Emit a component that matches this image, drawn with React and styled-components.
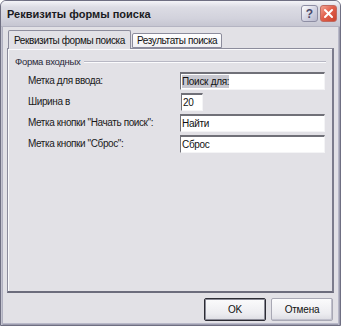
import React from "react";
import styled, { createGlobalStyle } from "styled-components";

const Global = createGlobalStyle`
  html, body {
    margin: 0;
    padding: 0;
    background: #ffffff;
  }
  body {
    font-family: "Liberation Sans", Arial, sans-serif;
  }
`;

const Window = styled.div`
  width: 341px;
  height: 326px;
  box-sizing: border-box;
  display: flex;
  flex-direction: column;
  background: #e2e1e6;
  border: 1px solid #6f6f82;
  border-radius: 6px 6px 0 0;
  overflow: hidden;
  box-shadow: inset 1px 0 0 #c4c4d0, inset 2px 0 0 #b0b0c0, inset -1px 0 0 #9c9cae,
    inset -2px 0 0 #b8b8c8, inset 0 -1px 0 #9c9cae, inset 0 -2px 0 #b8b8c8;
`;

const TitleBar = styled.div`
  height: 25px;
  flex: none;
  display: flex;
  align-items: center;
  padding: 0 3px 0 6px;
  background: linear-gradient(#f4f4f8 0%, #dcdce4 25%, #d2d2dc 70%, #c6c6d2 100%);
  border-bottom: 1px solid #b4b4c2;
`;

const Title = styled.div`
  flex: 1;
  font-weight: bold;
  font-size: 11px;
  color: #1a1a22;
`;

const CaptionButton = styled.div`
  width: 17px;
  height: 17px;
  box-sizing: border-box;
  margin-left: 2px;
  border-radius: 3px;
  border: 1px solid ${(p) => (p.$close ? "#c06a60" : "#8e8ea4")};
  background: ${(p) =>
    p.$close
      ? "linear-gradient(135deg, #f2a494 0%, #e2604c 45%, #c9442e 100%)"
      : "linear-gradient(135deg, #ffffff 0%, #d6d6e4 50%, #b8b8cc 100%)"};
  display: flex;
  align-items: center;
  justify-content: center;
  font-weight: bold;
  font-size: 12px;
  color: #4a4a6a;
`;

const Client = styled.div`
  flex: 1;
  display: flex;
  flex-direction: column;
  padding: 3px 6px 4px 6px;
`;

const TabRow = styled.div`
  display: flex;
  align-items: flex-end;
  height: 18px;
  padding-left: 1px;
  position: relative;
  z-index: 1;
`;

const Tab = styled.div`
  box-sizing: border-box;
  height: ${(p) => (p.$active ? "19px" : "15px")};
  margin-bottom: ${(p) => (p.$active ? "-1px" : "0")};
  padding: 0 ${(p) => (p.$active ? "5px" : "4px")};
  display: flex;
  align-items: center;
  font-size: 10px;
  letter-spacing: -0.4px;
  color: #111;
  border: 1px solid #8c8c9c;
  border-bottom: ${(p) => (p.$active ? "none" : "1px solid #8c8c9c")};
  border-radius: 2px 2px 0 0;
  background: ${(p) => (p.$active ? "#e2e1e6" : "linear-gradient(#ffffff, #f0f0f4)")};
  margin-left: ${(p) => (p.$active ? "0" : "1px")};
`;

const Panel = styled.div`
  flex: 1;
  box-sizing: border-box;
  border: 1px solid #8c8c9c;
  border-right: 2px solid #7c7c8c;
  border-bottom: 2px solid #6c6c7c;
  box-shadow: inset 1px 1px 0 #fafafc;
  background: #e2e1e6;
  padding: 7px 7px 0 7px;
`;

const GroupHead = styled.div`
  display: flex;
  align-items: center;
  font-size: 9.5px;
  letter-spacing: -0.3px;
  color: #2a2a3a;
  margin-bottom: 5px;
  &::after {
    content: "";
    flex: 1;
    height: 0;
    margin-left: 4px;
    margin-right: -1px;
    border-top: 1px solid #b8b8c4;
    border-bottom: 1px solid #fbfbfd;
  }
`;

const Rows = styled.div`
  display: flex;
  flex-direction: column;
  gap: 4px;
  padding-left: 13px;
`;

const Row = styled.div`
  display: flex;
  align-items: center;
  height: 17px;
`;

const Label = styled.div`
  width: 153px;
  font-size: 10px;
  letter-spacing: -0.4px;
  color: #1a1a1a;
`;

const Field = styled.div`
  box-sizing: border-box;
  width: ${(p) => p.$w}px;
  height: 18px;
  background: #ffffff;
  border-top: 2px solid #707078;
  border-left: 1px solid #707078;
  border-right: 1px solid #f4f4f6;
  border-bottom: 1px solid #f4f4f6;
  padding-left: 1px;
  display: flex;
  align-items: center;
  font-size: 10px;
  letter-spacing: -0.3px;
  color: #111;
`;

const Selected = styled.span`
  background: #c8c8d0;
  padding: 1px 0;
`;

const Footer = styled.div`
  display: flex;
  justify-content: flex-end;
  gap: 5px;
  padding: 5px 1px 0 0;
`;

const Button = styled.div`
  box-sizing: border-box;
  width: ${(p) => p.$w}px;
  height: 23px;
  display: flex;
  align-items: center;
  justify-content: center;
  font-size: 10px;
  letter-spacing: -0.2px;
  color: #111;
  border-radius: 2px;
  border: 1px solid ${(p) => (p.$default ? "#2c2c34" : "#a8a8b4")};
  box-shadow: ${(p) =>
    p.$default ? "inset 0 0 0 1px #8a8a96" : "inset -1px -1px 0 #c0c0cc"};
  background: linear-gradient(#fbfbfc, #ececf0 70%, #dcdce2);
`;

const fields = [
  { label: "Метка для ввода:", value: "Поиск для:", w: 146, sel: true },
  { label: "Ширина в", value: "20", w: 22 },
  { label: "Метка кнопки \"Начать поиск\":", value: "Найти", w: 146 },
  { label: "Метка кнопки \"Сброс\":", value: "Сброс", w: 146 },
];

export default function App() {
  return (
    <>
      <Global />
      <Window>
        <TitleBar>
          <Title>Реквизиты формы поиска</Title>
          <CaptionButton>?</CaptionButton>
          <CaptionButton $close>
            <svg width="11" height="11" viewBox="0 0 11 11">
              <path d="M2 2 L9 9 M9 2 L2 9" stroke="#ffffff" strokeWidth="2" strokeLinecap="round" />
            </svg>
          </CaptionButton>
        </TitleBar>
        <Client>
          <TabRow>
            <Tab $active>Реквизиты формы поиска</Tab>
            <Tab>Результаты поиска</Tab>
          </TabRow>
          <Panel>
            <GroupHead>Форма входных</GroupHead>
            <Rows>
              {fields.map((f) => (
                <Row key={f.label}>
                  <Label>{f.label}</Label>
                  <Field $w={f.w}>{f.sel ? <Selected>{f.value}</Selected> : f.value}</Field>
                </Row>
              ))}
            </Rows>
          </Panel>
          <Footer>
            <Button $w={62} $default>OK</Button>
            <Button $w={62}>Отмена</Button>
          </Footer>
        </Client>
      </Window>
    </>
  );
}
